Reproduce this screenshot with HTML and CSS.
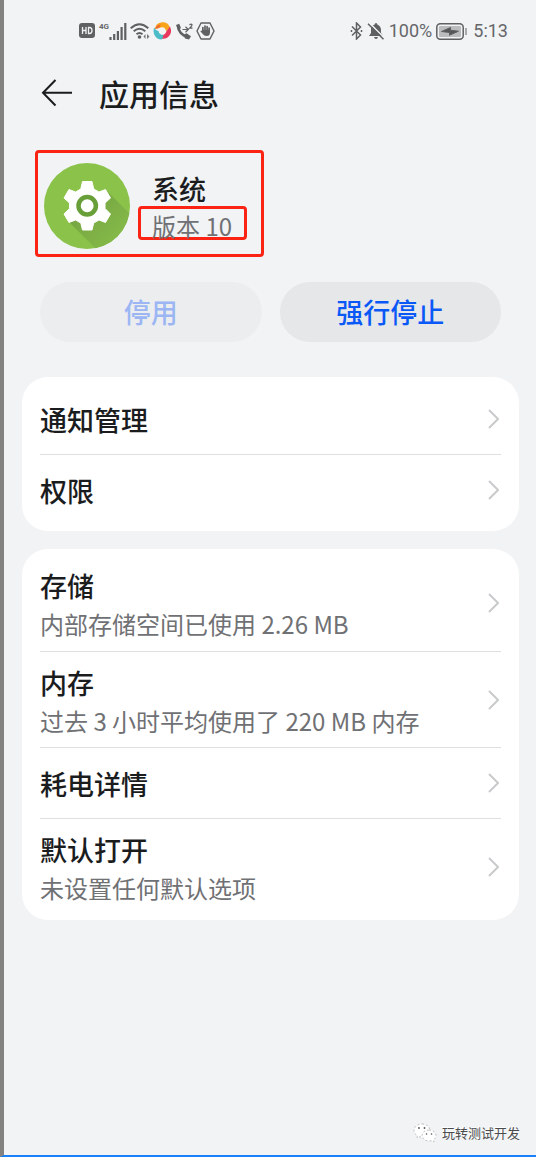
FILE: index.html
```html
<!DOCTYPE html>
<html lang="zh-CN">
<head>
<meta charset="utf-8">
<meta name="viewport" content="width=device-width, initial-scale=1">
<title>应用信息</title>
<link rel="stylesheet" href="styles.css">
</head>
<body>
<div class="screen">
  <div class="status">
    <div class="status-group icons">
      <svg width="16" height="16" viewBox="0 0 16 16" aria-hidden="true"><rect width="16" height="15" rx="3" fill="#5f6062"/><path d="M3.500 4v7M7 4v7M3.500 7.500H7M9.500 4.500v6h1q2.500 0 2.500-3t-2.500-3z" fill="none" stroke="#f1f2f4" stroke-width="1.300"/></svg>
      <div class="signal">
        <span class="network">4G</span>
        <svg width="18" height="17" viewBox="0 0 18 17" aria-hidden="true"><path d="M1.500 14v3M5.200 11v6M8.900 8v9M12.600 4v13M16.300 0v17" stroke="#5f6062" stroke-width="2.200"/></svg>
      </div>
      <svg width="20" height="18" viewBox="0 0 20 18" aria-hidden="true"><g fill="none" stroke="#5f6062" stroke-width="2"><path d="M.7 6.200Q9.500-1.800 18.300 6.200M3.700 9.300q5.800-5.200 11.600 0M6.500 12.300q3-2.600 6 0"/></g><circle cx="9.500" cy="15" r="1.800" fill="#5f6062"/><path d="m15.500 12-2 2.500 2 2.500zM17 12l2.500 2.500L17 17z" fill="#777"/></svg>
      <svg width="19" height="18" viewBox="0 0 19 18" aria-hidden="true"><path d="M2 7Q2.500 1 9 .3q6-.4 8 5.200L13 9Q12 4.500 8 5.500z" fill="#f9a51c"/><path d="M17 4.500q3 7-2.500 11-3 2-7 1l-1-4q5.500 2 7-3.500z" fill="#e9385d"/><path d="M1 5.500q1.500 3 4.500 3.500.5 4 5 4L9 17.500q-6 0-8-5.500-.9-3.500 0-6.500z" fill="#4dbcc9"/><path d="M2 7Q3.500 2.500 8 2.500L6 6z" fill="#ef6b30"/></svg>
      <svg width="18" height="17" viewBox="0 0 18 17" aria-hidden="true"><path d="M2.800 2.500Q3.500 11.500 13.500 14.500" fill="none" stroke="#5f6062" stroke-width="2.600"/><path d="m1 2 3.200-1.200L6 5 3.500 7zM9 11.500l2.500-1.300 4.500 3-2 3.200-4-1z" fill="#5f6062"/><path d="M7.500 6.500H13M10.500 3.800l2.800 2.700-2.800 2.700M14.500 2.200q1.400-2 2.500-.5.300 1.200-2.500 3.500h3" fill="none" stroke="#5f6062" stroke-width="1.200"/></svg>
      <svg width="19" height="18" viewBox="0 0 19 18" aria-hidden="true"><path d="M5 1h9l4 8-4 8H5L1 9z" fill="none" stroke="#5f6062" stroke-width="1.400" stroke-linejoin="round"/><path d="M6.900 10V5.500M9 9V4M11.100 9V4.500M13.100 9.500V6" stroke="#5f6062" stroke-width="1.700" stroke-linecap="round"/><path d="M6 8h8v2.500q0 3.500-3.500 3.500Q8 14 6.800 12L4.300 9.300l1-.9L6 9z" fill="#5f6062"/></svg>
    </div>
    <div class="status-group">
      <svg width="13" height="18" viewBox="0 0 13 18" aria-hidden="true"><path d="m2 4.500 8.500 8.500L6.500 17V1l4 4L2 13.500" fill="none" stroke="#5f6062" stroke-width="1.500"/><path d="M1.500 8v2M11.500 8v2" stroke="#5f6062" stroke-width="1.500"/></svg>
      <svg width="18" height="18" viewBox="0 0 18 18" aria-hidden="true"><path d="M9 1q1.300 0 1.300 1.500Q14 4 14 8v3l2 3H2l2-3V7q0-3.500 3.700-4.500Q7.700 1 9 1zM7 15h4q-.5 2-2 2t-2-2z" fill="#5f6062"/><path d="m2 .5 15.500 15.500" stroke="#f1f2f4" stroke-width="1.500"/><path d="m1 1.800 15.500 15.500" stroke="#5f6062" stroke-width="1.500"/></svg>
      <span>100%</span>
      <svg width="32" height="17" viewBox="0 0 32 17" aria-hidden="true"><rect x=".8" y=".8" width="26.400" height="15.400" rx="3.500" fill="none" stroke="#5f6062" stroke-width="1.500"/><rect x="3" y="3" width="22" height="11" rx="1" fill="#bbbcbe"/><path d="m5.500 8.500 9-4v2.700l8 1-9 4V9.500zM30 5v7" fill="#555658" stroke="#5f6062"/></svg>
      <span class="clock">5:13</span>
    </div>
  </div>

  <header class="topbar">
    <button class="back" type="button" aria-label="返回"><svg width="32" height="28" viewBox="0 0 32 28" aria-hidden="true"><path d="M14.500 1 2 13.700 14.500 26.500M2 13.700h29" fill="none" stroke="#1b1c1e" stroke-width="2"/></svg></button>
    <h1>应用信息</h1>
  </header>

  <main>
    <section class="app">
      <svg class="app-icon" width="86" height="86" viewBox="0 0 86 86" aria-hidden="true">
        <defs><clipPath id="disc"><circle cx="43" cy="43" r="43"/></clipPath><linearGradient id="shade" x1="0" y1="0" x2="1" y2="1"><stop offset=".3" stop-color="#78a844"/><stop offset=".85" stop-color="#87bd49"/></linearGradient></defs>
        <g clip-path="url(#disc)"><path d="M0 0h86v86H0z" fill="#8bc34a"/><path d="m25 59 36-33 30 30v35H57z" fill="url(#shade)"/></g>
        <path d="M38.500 18.500h9.500l1.700 7.500 5.300 3 6.500-2.500 5 8.500-5.500 5v5.500l5.500 5.500-5 8.500-6.500-2.500-5.300 3-1.700 7h-9.500l-1.700-7-5.300-3-6.500 2.500-5-8.500 5.500-5.500V40L20 35l5-8.500 6.500 2.500 5.300-3z" fill="#fff" stroke="#fff" stroke-linejoin="round"/>
        <circle cx="43.200" cy="42.700" r="8.700" fill="#fff" stroke="#689f38" stroke-width="4.500"/>
      </svg>
      <div class="app-text">
        <h2>系统</h2>
        <p class="version">版本 10</p>
      </div>
    </section>

    <div class="actions">
      <button type="button" disabled>停用</button>
      <button type="button">强行停止</button>
    </div>

    <nav class="card">
      <a class="row" href="#notifications"><span class="label">通知管理</span><svg class="chevron" viewBox="0 0 12 22" aria-hidden="true"><path d="m2 2 9 9-9 9"/></svg></a>
      <a class="row" href="#permissions"><span class="label">权限</span><svg class="chevron" viewBox="0 0 12 22" aria-hidden="true"><path d="m2 2 9 9-9 9"/></svg></a>
    </nav>

    <nav class="card">
      <a class="row tall" href="#storage"><span class="label">存储<small>内部存储空间已使用 2.26 MB</small></span><svg class="chevron" viewBox="0 0 12 22" aria-hidden="true"><path d="m2 2 9 9-9 9"/></svg></a>
      <a class="row tall" href="#memory"><span class="label">内存<small>过去 3 小时平均使用了 220 MB 内存</small></span><svg class="chevron" viewBox="0 0 12 22" aria-hidden="true"><path d="m2 2 9 9-9 9"/></svg></a>
      <a class="row" href="#battery"><span class="label">耗电详情</span><svg class="chevron" viewBox="0 0 12 22" aria-hidden="true"><path d="m2 2 9 9-9 9"/></svg></a>
      <a class="row tall" href="#defaults"><span class="label">默认打开<small>未设置任何默认选项</small></span><svg class="chevron" viewBox="0 0 12 22" aria-hidden="true"><path d="m2 2 9 9-9 9"/></svg></a>
    </nav>
  </main>

  <footer class="credit">
    <svg width="24" height="20" viewBox="0 0 24 20" aria-hidden="true"><g fill="#fff" stroke="#a5a6a8" stroke-width=".7" stroke-dasharray="2 2"><path d="M9 1c5 0 8 3 8 6.500S14 14 9 14l-2-.3L4 15l.5-2.500C2 11.500 1 9.500 1 7.500 1 4 4 1 9 1z"/><path d="M16 7c4 0 7 2.500 7 5.500 0 2-1 3.500-2.500 4.500l.5 2-2.500-1.200L16 18c-4 0-7-2.500-7-5.500S12 7 16 7z"/></g><g fill="#555"><circle cx="6" cy="5" r=".9"/><circle cx="11.500" cy="5" r=".9"/><circle cx="13.500" cy="11" r=".8"/><circle cx="18.500" cy="11" r=".8"/></g></svg>
    <span>玩转测试开发</span>
  </footer>
</div>
</body>
</html>
```

FILE: styles.css
```css
* { box-sizing: border-box; }

body {
  margin: 0;
  font-family: "Noto Sans CJK SC", sans-serif;
  color: #1b1c1e;
  background: #f1f3f5;
}

h1, h2, p { margin: 0; font-weight: 500; }

.screen {
  display: flex;
  flex-direction: column;
  min-height: 100vh;
  border-left: 4px solid #848280;
  border-bottom: 2px solid #1a80fa;
}

.status {
  display: flex;
  justify-content: space-between;
  align-items: center;
  height: 62px;
  padding: 0 28px 0 75px;
  font: 18px/20px Roboto, sans-serif;
  color: #66676a;
}

.status-group { display: flex; align-items: center; gap: 4px; }
.status-group.icons { gap: 3px; }
.signal { display: flex; align-items: flex-start; padding-left: 1px; }
.network { font: bold 8px/8px Roboto, sans-serif; }
.clock { padding-left: 1px; }

.topbar {
  display: flex;
  align-items: center;
  gap: 26px;
  height: 62px;
  padding-left: 37px;
}

.topbar h1 { font-size: 30px; line-height: 36px; }

.back {
  display: flex;
  padding: 0;
  border: 0;
  background: none;
}

main { display: flex; flex-direction: column; padding: 26px 17px 0 18px; }

.app {
  display: flex;
  align-self: flex-start;
  width: 229px;
  height: 107px;
  margin-left: 13px;
  padding: 10px 6px;
  gap: 8px;
  border: 3px solid #fb2313;
  border-radius: 4px;
}

.app-icon { flex: none; }
.app-text { padding-top: 8px; }
.app-text h2 { padding-left: 14px; font-size: 27px; line-height: 35px; }

.version {
  width: 109px;
  height: 34px;
  padding-left: 11px;
  border: 3px solid #fb2313;
  border-radius: 4px;
  font-size: 24px;
  font-weight: 400;
  line-height: 34px;
  color: #707174;
}

.actions {
  display: grid;
  grid-template-columns: 1fr 1fr;
  gap: 18px;
  padding: 25px 18px 35px;
}

.actions button {
  height: 60px;
  border: 0;
  border-radius: 30px;
  background: #e6e7e9;
  font: 500 27px/36px "Noto Sans CJK SC", sans-serif;
  color: #0a59f7;
}

.actions button:disabled { background: #ecedef; color: #9bb6f3; }

.card {
  margin-bottom: 18px;
  padding: 6px 18px;
  border-radius: 26px;
  background: #fff;
}

.row {
  display: flex;
  align-items: center;
  justify-content: space-between;
  min-height: 71px;
  padding-right: 2px;
  color: inherit;
  text-decoration: none;
}

.row.tall { min-height: 96px; }
.row + .row { border-top: 1px solid #dedfe0; }

.label { padding-top: 2px; font-size: 27px; font-weight: 500; line-height: 38px; }
.tall .label { padding-top: 4px; }
.label small {
  display: block;
  font-size: 24px;
  font-weight: 400;
  color: #707174;
}

.chevron {
  flex: none;
  width: 12px;
  height: 22px;
  fill: none;
  stroke: #c9cacc;
  stroke-width: 2;
}

.credit {
  display: flex;
  align-items: center;
  justify-content: flex-end;
  gap: 5px;
  margin-top: auto;
  padding: 0 16px 12px 0;
  font-size: 13px;
  line-height: 20px;
  color: #4a4b4d;
  text-shadow: -1px -1px 0 #fff;
}
```
